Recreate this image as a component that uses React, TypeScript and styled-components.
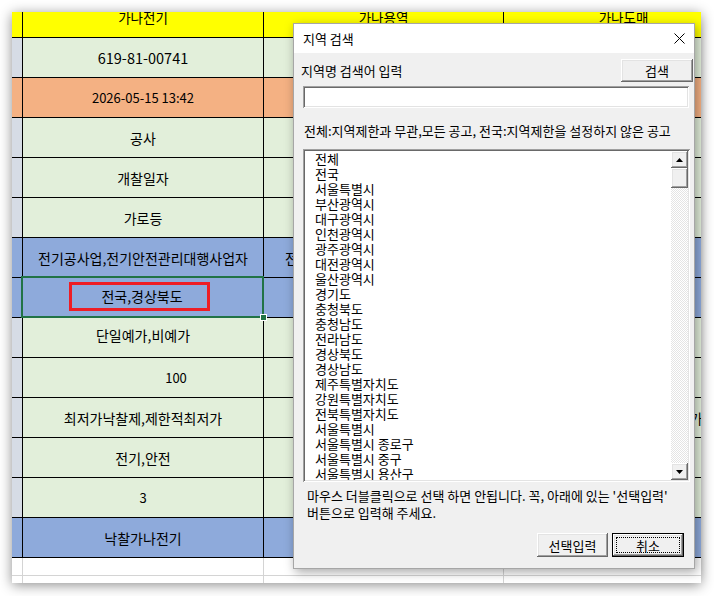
import React from 'react'
import styled, { createGlobalStyle, css } from 'styled-components'

type Tone = 'head' | 'green' | 'orange' | 'blue' | 'blank'

const FILL: Record<Tone, string> = {
    head: '#ffff00',
    green: '#e2efda',
    orange: '#f4b183',
    blue: '#8eaadb',
    blank: '#ffffff',
}

const STRIP: Record<Tone, string> = {
    head: '#ffff00',
    green: '#d6dce5',
    orange: '#f4b183',
    blue: '#8eaadb',
    blank: '#ffffff',
}

interface Row {
    tone: Tone
    cells: string[]
    size?: number
    nudge?: number
    shift?: number
    mark?: boolean
}

// only the parts of columns 2 and 3 that peek out from behind the dialog carry text
const ROWS: Row[] = [
    { tone: 'head', size: 13.5, cells: ['가나전기', '가나용역', '가나도매'] },
    { tone: 'green', size: 14.5, cells: ['619-81-00741', '', ''] },
    { tone: 'orange', size: 13, cells: ['2026-05-15 13:42', '', ''] },
    { tone: 'green', cells: ['공사', '', ''] },
    { tone: 'green', cells: ['개찰일자', '', ''] },
    { tone: 'green', cells: ['가로등', '', ''] },
    { tone: 'blue', cells: ['전기공사업,전기안전관리대행사업자', '전기공사업,전기안전관리대행사업', ''] },
    { tone: 'blue', mark: true, cells: ['전국,경상북도', '', ''] },
    { tone: 'green', nudge: 3, cells: ['단일예가,비예가', '', ''] },
    { tone: 'green', size: 13, shift: 33, cells: ['100', '', ''] },
    { tone: 'green', cells: ['최저가낙찰제,제한적최저가', '', '최저가낙찰제,제한적최저가'] },
    { tone: 'green', cells: ['전기,안전', '', ''] },
    { tone: 'green', size: 13, cells: ['3', '', ''] },
    { tone: 'blue', cells: ['낙찰가나전기', '', ''] },
    { tone: 'blank', cells: ['', '', ''] },
    { tone: 'blank', cells: ['', '', ''] },
]

const REGIONS = [
    '전체', '전국', '서울특별시', '부산광역시', '대구광역시', '인천광역시', '광주광역시',
    '대전광역시', '울산광역시', '경기도', '충청북도', '충청남도', '전라남도', '경상북도',
    '경상남도', '제주특별자치도', '강원특별자치도', '전북특별자치도', '서울특별시',
    '서울특별시 종로구', '서울특별시 중구', '서울특별시 용산구',
]

export default function App() {
    return (
        <Stage>
            <GlobalStyle />
            <Sheet>
                {ROWS.map((row, r) => (
                    <React.Fragment key={r}>
                        <Strip $tone={row.tone} />
                        {row.cells.map((text, c) => {
                            const first = c === 0
                            const selected = !!row.mark && first
                            return (
                                <Cell
                                    key={c}
                                    $tone={row.tone}
                                    $size={row.size}
                                    $nudge={row.nudge}
                                    $shift={first ? row.shift : 0}
                                    $selected={selected}
                                >
                                    {selected ? (
                                        <RedBox>{text}</RedBox>
                                    ) : (
                                        text && <CellText $head={row.tone === 'head'}>{text}</CellText>
                                    )}
                                    {selected && <Handle />}
                                </Cell>
                            )
                        })}
                    </React.Fragment>
                ))}
            </Sheet>

            <Dialog>
                <TitleBar>
                    <span>지역 검색</span>
                    <svg width="11" height="11" viewBox="0 0 11 11">
                        <path d="M0.5 0.5 L10.5 10.5 M10.5 0.5 L0.5 10.5" stroke="#000" strokeWidth="1" />
                    </svg>
                </TitleBar>
                <Body>
                    <TopRow>
                        <span>지역명 검색어 입력</span>
                        <WinButton $w={72} $h={23}>검색</WinButton>
                    </TopRow>
                    <SearchInput />
                    <Hint>전체:지역제한과 무관,모든 공고, 전국:지역제한을 설정하지 않은 공고</Hint>
                    <ListBox>
                        <Items>
                            {REGIONS.map((name, i) => (
                                <Item key={i}>{name}</Item>
                            ))}
                        </Items>
                        <ScrollBar>
                            <ScrollButton>
                                <svg width="7" height="4" viewBox="0 0 7 4">
                                    <polygon points="3.5,0 7,4 0,4" fill="#000" />
                                </svg>
                            </ScrollButton>
                            <Thumb />
                            <Track />
                            <ScrollButton>
                                <svg width="7" height="4" viewBox="0 0 7 4">
                                    <polygon points="0,0 7,0 3.5,4" fill="#000" />
                                </svg>
                            </ScrollButton>
                        </ScrollBar>
                    </ListBox>
                    <Notice>
                        마우스 더블클릭으로 선택 하면 안됩니다. 꼭, 아래에 있는 '선택입력'
                        <br />
                        버튼으로 입력해 주세요.
                    </Notice>
                    <ButtonRow>
                        <WinButton $w={71} $h={24}>선택입력</WinButton>
                        <WinButton $w={72} $h={24} $default>취소</WinButton>
                    </ButtonRow>
                </Body>
            </Dialog>
        </Stage>
    )
}

const GlobalStyle = createGlobalStyle`
    html, body {
        margin: 0;
        padding: 0;
        background: #ffffff;
    }
    body {
        width: 714px;
        height: 596px;
        overflow: hidden;
        font-family: "Noto Sans CJK KR", "Noto Sans", sans-serif;
        color: #000;
    }
`

const Stage = styled.div`
    position: relative;
    box-sizing: border-box;
    width: 714px;
    height: 596px;
    padding: 12px;
`

const Sheet = styled.div`
    width: 689px;
    height: 571px;
    overflow: hidden;
    display: grid;
    grid-template-columns: 11px 241px 240px 240px;
    grid-template-rows: 26px repeat(13, 40px) 18px 18px;
    background: #fff;
    box-shadow: 0 2px 12px rgba(0, 0, 0, 0.45);
`

const lineOf = (tone: Tone) => (tone === 'blank' ? '#d4d4d4' : '#000')

const Strip = styled.div<{ $tone: Tone }>`
    box-sizing: border-box;
    background: ${p => STRIP[p.$tone]};
    border-right: 1px solid ${p => lineOf(p.$tone)};
    border-bottom: 1px solid ${p => lineOf(p.$tone)};
`

const Cell = styled.div<{ $tone: Tone; $size?: number; $nudge?: number; $shift?: number; $selected?: boolean }>`
    position: relative;
    box-sizing: border-box;
    display: flex;
    align-items: ${p => (p.$tone === 'head' ? 'flex-start' : 'center')};
    justify-content: center;
    overflow: hidden;
    padding-left: ${p => (p.$shift ?? 0) * 2}px;
    padding-bottom: ${p => (p.$nudge ?? 0) * 2}px;
    background: ${p => FILL[p.$tone]};
    border-right: 1px solid ${p => lineOf(p.$tone)};
    border-bottom: 1px solid ${p => lineOf(p.$tone)};
    font-size: ${p => p.$size ?? 14}px;
    white-space: nowrap;
    ${p =>
        p.$selected &&
        css`
            overflow: visible;
            z-index: 2;
            &::after {
                content: '';
                position: absolute;
                inset: -2px -1px -1px -2px;
                border: 2px solid #217346;
                pointer-events: none;
            }
        `}
`

const CellText = styled.span<{ $head?: boolean }>`
    line-height: 18px;
    margin-top: ${p => (p.$head ? '-4px' : '0')};
`

const RedBox = styled.span`
    box-sizing: border-box;
    display: flex;
    align-items: center;
    justify-content: center;
    width: 141px;
    height: 29px;
    margin: 0 8px 3px 0;
    padding-left: 6px;
    border: 3px solid #ee1d25;
`

const Handle = styled.i`
    position: absolute;
    right: -4px;
    bottom: -4px;
    width: 5px;
    height: 5px;
    background: #217346;
    border: 1px solid #fff;
    z-index: 3;
`

const Dialog = styled.div`
    position: absolute;
    left: 293px;
    top: 23px;
    box-sizing: border-box;
    width: 402px;
    height: 546px;
    display: flex;
    flex-direction: column;
    border: 1px solid #a6a6a6;
    background: #f0f0f0;
    box-shadow: 2px 3px 10px rgba(0, 0, 0, 0.35);
    font-size: 13px;
    color: #000;
`

const TitleBar = styled.div`
    height: 29px;
    flex: none;
    display: flex;
    align-items: center;
    justify-content: space-between;
    padding: 0 9px 0 9px;
    background: #fff;
    line-height: 15px;
`

const Body = styled.div`
    flex: 1;
    display: flex;
    flex-direction: column;
`

const TopRow = styled.div`
    height: 23px;
    margin: 6px 1px 0 7px;
    display: flex;
    align-items: center;
    justify-content: space-between;
`

const sunken = css`
    box-shadow: inset 1px 1px #a0a0a0, inset -1px -1px #ffffff, inset 2px 2px #696969, inset -2px -2px #e3e3e3;
`

const raised = css`
    box-shadow: inset -1px -1px #696969, inset 1px 1px #ffffff, inset -2px -2px #a0a0a0, inset 2px 2px #e3e3e3;
`

const SearchInput = styled.div`
    height: 22px;
    margin: 4px 5px 0 9px;
    background: #fff;
    ${sunken}
`

const Hint = styled.div`
    margin: 14px 0 0 10px;
    line-height: 17px;
    white-space: nowrap;
`

const ListBox = styled.div`
    box-sizing: border-box;
    height: 333px;
    margin: 10px 4px 0 9px;
    padding: 2px;
    display: flex;
    background: #fff;
    ${sunken}
`

const Items = styled.div`
    flex: 1;
    overflow: hidden;
    padding-left: 10px;
`

const Item = styled.div`
    height: 15px;
    line-height: 15px;
    white-space: nowrap;
`

const ScrollBar = styled.div`
    width: 17px;
    display: flex;
    flex-direction: column;
`

const ScrollButton = styled.div`
    height: 17px;
    flex: none;
    display: flex;
    align-items: center;
    justify-content: center;
    background: #f0f0f0;
    ${raised}
`

const Thumb = styled.div`
    height: 20px;
    flex: none;
    background: #f0f0f0;
    ${raised}
`

const Track = styled.div`
    flex: 1;
    background: repeating-conic-gradient(#e4e4e4 0 25%, #ffffff 0 50%) 0 0 / 2px 2px;
`

const Notice = styled.div`
    margin: 5px 0 0 13px;
    line-height: 17px;
    white-space: nowrap;
`

const ButtonRow = styled.div`
    display: flex;
    justify-content: flex-end;
    gap: 4px;
    margin: 12px 10px 0 0;
`

const WinButton = styled.div<{ $w: number; $h: number; $default?: boolean }>`
    position: relative;
    box-sizing: border-box;
    width: ${p => p.$w}px;
    height: ${p => p.$h}px;
    display: flex;
    align-items: center;
    justify-content: center;
    background: #f0f0f0;
    ${raised}
    ${p =>
        p.$default &&
        css`
            box-shadow: inset 0 0 0 1px #000, inset -2px -2px #696969, inset 2px 2px #ffffff,
                inset -3px -3px #a0a0a0, inset 3px 3px #e3e3e3;
            &::after {
                content: '';
                position: absolute;
                inset: 4px;
                border: 1px dotted #000;
            }
        `}
`
